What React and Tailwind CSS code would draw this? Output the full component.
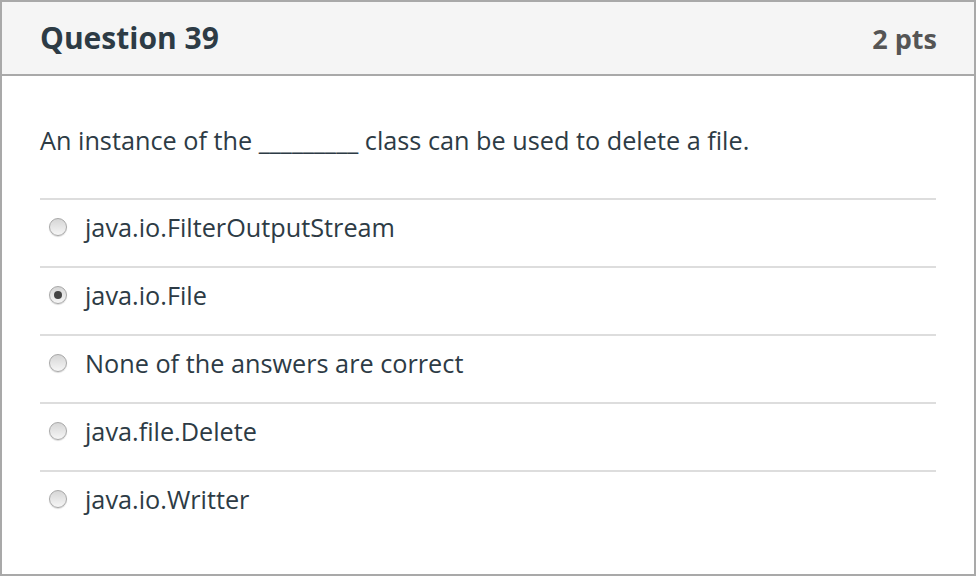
import React from 'react';

const options = [
  { label: 'java.io.FilterOutputStream', checked: false },
  { label: 'java.io.File', checked: true },
  { label: 'None of the answers are correct', checked: false },
  { label: 'java.file.Delete', checked: false },
  { label: 'java.io.Writter', checked: false },
];

const Radio = ({ checked }) => (
  <span className="w-[18px] h-[18px] rounded-full border border-[#a8a8a8] bg-gradient-to-b from-[#d6d6d6] to-[#f6f6f6] shadow-[0_1px_1px_rgba(0,0,0,0.15)] flex items-center justify-center shrink-0">
    {checked && <span className="w-[8px] h-[8px] rounded-full bg-[#444]" />}
  </span>
);

export default function App() {
  return (
    <div className="w-[976px] h-[576px] bg-white border-2 border-[#a9a9a9] flex flex-col font-['Open_Sans',sans-serif] text-[#2d3b45]">
      <div className="h-[74px] bg-[#f5f5f5] border-b-2 border-[#a9a9a9] flex items-center justify-between pl-[38px] pr-[37px]">
        <h2 className="text-[30px] font-bold text-[#2d3b45] leading-none">Question 39</h2>
        <span className="text-[27px] font-bold text-[#555] leading-none">2 pts</span>
      </div>
      <div className="px-[38px] pt-[49px]">
        <p className="text-[25.25px] leading-[30px]">
          An instance of the _________ class can be used to delete a file.
        </p>
        <div className="mt-[43px]">
          {options.map((o) => (
            <div key={o.label} className="h-[68px] border-t-2 border-[#dddddd] pt-[12px] flex items-start gap-[18px] pl-[9px]">
              <span className="h-[30px] flex items-center">
                <Radio checked={o.checked} />
              </span>
              <span className="text-[25.25px] leading-[30px]">{o.label}</span>
            </div>
          ))}
        </div>
      </div>
    </div>
  );
}
